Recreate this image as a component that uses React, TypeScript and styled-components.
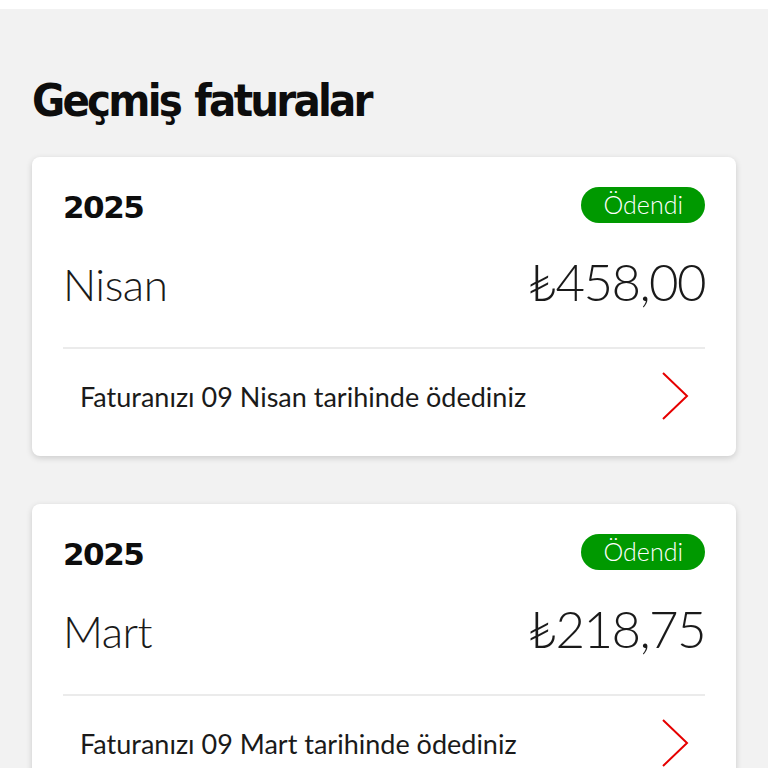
import styled, { createGlobalStyle } from 'styled-components';

interface Bill {
  id: string;
  year: number;
  month: string;
  amount: string;
  paidOn: string;
}

const bills: Bill[] = [
  { id: '2025-04', year: 2025, month: 'Nisan', amount: '₺458,00', paidOn: '09 Nisan' },
  { id: '2025-03', year: 2025, month: 'Mart', amount: '₺218,75', paidOn: '09 Mart' },
];

const Chevron = () => (
  <svg width="28" height="50" viewBox="0 0 28 50" fill="none">
    <path d="M2 2 L26 25 L2 48" stroke="#e60000" strokeWidth="2" strokeLinejoin="miter" />
  </svg>
);

export default function App() {
  return (
    <>
      <GlobalStyle />
      <TopStrip />
      <Page>
        <Title>Geçmiş faturalar</Title>
        <CardList>
          {bills.map((bill) => (
            <Card key={bill.id}>
              <CardHeader>
                <Year>{bill.year}</Year>
                <StatusBadge>Ödendi</StatusBadge>
              </CardHeader>
              <AmountRow>
                <Month>{bill.month}</Month>
                <Amount>{bill.amount}</Amount>
              </AmountRow>
              <Divider />
              <FooterRow>
                <FooterText>Faturanızı {bill.paidOn} tarihinde ödediniz</FooterText>
                <Chevron />
              </FooterRow>
            </Card>
          ))}
        </CardList>
      </Page>
    </>
  );
}

const GlobalStyle = createGlobalStyle`
  body {
    margin: 0;
    background: #f2f2f2;
    font-family: Lato, 'Open Sans', sans-serif;
    color: #1a1a1a;
  }
`;

const TopStrip = styled.div`
  height: 9px;
  background: #ffffff;
`;

const Page = styled.main`
  padding: 0 32px 40px;
`;

const Title = styled.h1`
  margin: 0;
  padding-top: 66px;
  font-family: 'DejaVu Sans Condensed', 'DejaVu Sans', sans-serif;
  font-stretch: condensed;
  font-weight: 700;
  font-size: 45px;
  line-height: 52px;
  letter-spacing: -2.8px;
  word-spacing: 3px;
  color: #0d0d0d;
`;

const CardList = styled.div`
  display: flex;
  flex-direction: column;
  gap: 48px;
  margin-top: 30px;
`;

const Card = styled.section`
  background: #ffffff;
  border-radius: 8px;
  box-shadow: 0 2px 6px rgba(0, 0, 0, 0.16);
  padding: 30px 31px 13px;
`;

const CardHeader = styled.div`
  display: flex;
  justify-content: space-between;
  align-items: center;
  height: 36px;
`;

const Year = styled.div`
  margin-top: 3px;
  font-family: 'DejaVu Sans', sans-serif;
  font-weight: 700;
  font-size: 31px;
  letter-spacing: -1.5px;
  color: #0d0d0d;
`;

const StatusBadge = styled.div`
  height: 36px;
  padding: 0 22px;
  border-radius: 18px;
  background: #009900;
  color: #ffffff;
  font-family: Lato, sans-serif;
  font-weight: 300;
  font-size: 25px;
  line-height: 34px;
`;

const AmountRow = styled.div`
  display: flex;
  justify-content: space-between;
  align-items: baseline;
  margin-top: 24px;
  height: 70px;
  line-height: 70px;
`;

const Month = styled.div`
  font-family: Lato, sans-serif;
  font-weight: 300;
  font-size: 44px;
  letter-spacing: -0.5px;
  color: #1a1a1a;
`;

const Amount = styled.div`
  font-family: Lato, sans-serif;
  font-weight: 300;
  font-size: 51px;
  letter-spacing: -1.6px;
  color: #1a1a1a;
`;

const Divider = styled.hr`
  margin: 30px 0 0;
  border: 0;
  border-top: 2px solid #ebebeb;
`;

const FooterRow = styled.div`
  display: flex;
  justify-content: space-between;
  align-items: center;
  height: 94px;
  padding: 0 16px 0 17px;
`;

const FooterText = styled.div`
  font-family: Lato, sans-serif;
  font-weight: 400;
  font-size: 27px;
  color: #1a1a1a;
`;
